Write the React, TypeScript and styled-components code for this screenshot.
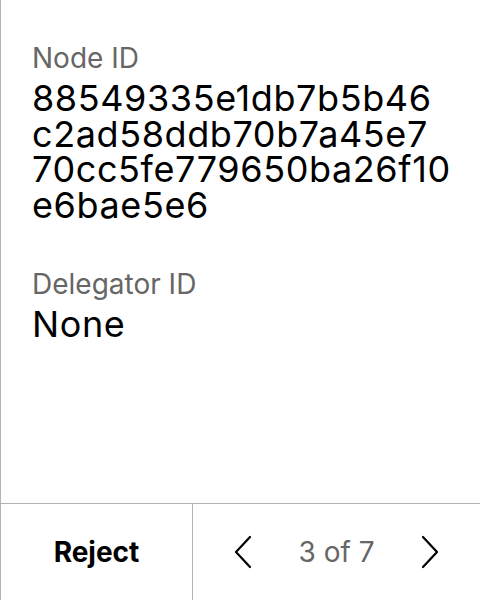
import React from "react";
import styled, { createGlobalStyle } from "styled-components";

const Global = createGlobalStyle`
  html, body { margin: 0; padding: 0; background: #fff; }
  body { font-family: Inter, "Noto Sans", sans-serif; color: #000; }
`;

const Screen = styled.div`
  width: 480px;
  height: 600px;
  box-sizing: border-box;
  border-left: 1px solid #b3b3b3;
  display: flex;
  flex-direction: column;
`;

const Body = styled.div`
  flex: 1;
  padding: 41px 24px 0 31px;
  display: flex;
  flex-direction: column;
  gap: 44px;
`;

const Field = styled.div`
  display: flex;
  flex-direction: column;
  gap: 6px;
`;

const Label = styled.div`
  font-size: 28px;
  line-height: 34px;
  color: #666;
`;

const Value = styled.div`
  font-size: 36px;
  line-height: 35.5px;
  letter-spacing: 0.6px;
  color: #000;
  word-break: normal;
  overflow-wrap: normal;
`;

const Footer = styled.div`
  height: 96px;
  border-top: 1px solid #b3b3b3;
  display: flex;
`;

const RejectButton = styled.button`
  width: 192px;
  border: none;
  border-right: 1px solid #b3b3b3;
  background: none;
  font-family: inherit;
  font-weight: 700;
  font-size: 28px;
  color: #000;
  padding: 0;
`;

const Pager = styled.div`
  flex: 1;
  display: flex;
  align-items: center;
  justify-content: space-between;
  padding: 0 40px 0 40px;
`;

const ArrowButton = styled.button`
  border: none;
  background: none;
  padding: 0;
  width: 20px;
  height: 34px;
  display: flex;
  align-items: center;
  justify-content: center;
`;

const Count = styled.span`
  font-size: 28px;
  color: #666;
`;

const Chevron = ({ dir }: { dir: "left" | "right" }) => (
  <svg width="18" height="34" viewBox="0 0 18 34" fill="none">
    <path
      d={dir === "left" ? "M16 2 L2 17 L16 32" : "M2 2 L16 17 L2 32"}
      stroke="#000"
      strokeWidth="2.2"
      strokeLinecap="round"
      strokeLinejoin="round"
    />
  </svg>
);

const NODE_ID = "88549335e1db7b5b46c2ad58ddb70b7a45e770cc5fe779650ba26f10e6bae5e6";
const BREAKS = [18, 36, 56];

const Hash = ({ value, breaks }: { value: string; breaks: number[] }) => {
  const points = [0, ...breaks, value.length];
  return (
    <>
      {points.slice(0, -1).map((start, i) => (
        <React.Fragment key={i}>
          {i > 0 && <wbr />}
          {value.slice(start, points[i + 1])}
        </React.Fragment>
      ))}
    </>
  );
};

export default function App() {
  return (
    <>
      <Global />
      <Screen>
        <Body>
          <Field>
            <Label>Node ID</Label>
            <Value>
              <Hash value={NODE_ID} breaks={BREAKS} />
            </Value>
          </Field>
          <Field>
            <Label>Delegator ID</Label>
            <Value>None</Value>
          </Field>
        </Body>
        <Footer>
          <RejectButton>Reject</RejectButton>
          <Pager>
            <ArrowButton><Chevron dir="left" /></ArrowButton>
            <Count>3 of 7</Count>
            <ArrowButton><Chevron dir="right" /></ArrowButton>
          </Pager>
        </Footer>
      </Screen>
    </>
  );
}
